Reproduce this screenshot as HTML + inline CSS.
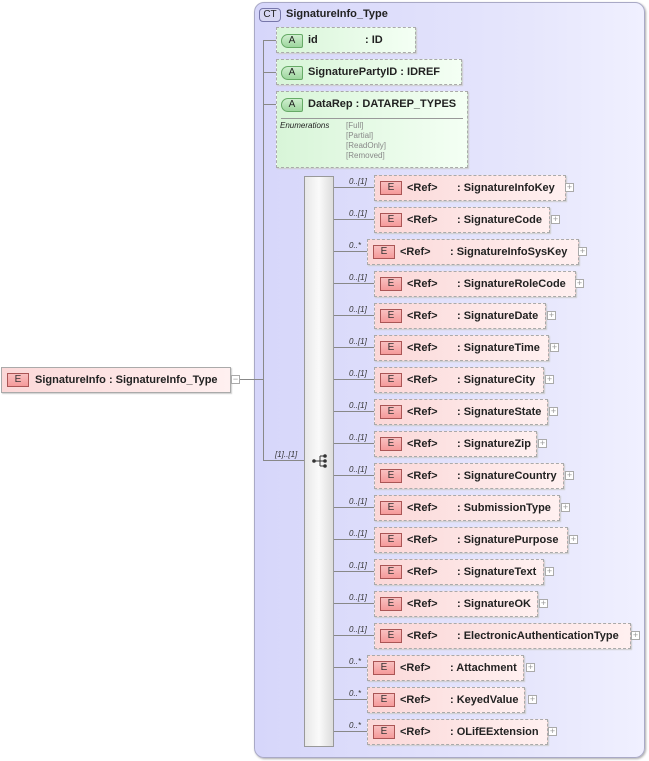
<!DOCTYPE html>
<html><head><meta charset="utf-8"><style>
*{margin:0;padding:0;box-sizing:border-box}
body{width:649px;height:761px;background:#fff;position:relative;overflow:hidden;font-family:"Liberation Sans",Arial,sans-serif;font-size:11px;font-weight:bold;color:#222}
.a{position:absolute}
.ct{left:254px;top:2px;width:391px;height:756px;background:linear-gradient(90deg,#d6d6fa,#e6e6fc 70%,#f0f0ff);border:1px solid #a9a9c6;border-radius:10px;box-shadow:1px 1px 2px #aaa}
.hl{position:absolute;height:1px;background:#888}
.vl{position:absolute;width:1px;background:#888}
.el{position:absolute;height:26px;background:linear-gradient(90deg,#fbd8d8,#fff0f0);border:1px dashed #aaa;box-shadow:1px 1px 1px #ccc}
.ic{position:absolute;left:5px;top:5px;width:22px;height:14px;border:1px solid #a55;background:linear-gradient(#f9c0c0,#f59a9a);font-size:10px;font-weight:normal;text-align:center;line-height:12px;color:#333}
.t{position:absolute;top:6px;white-space:nowrap}
.pl{position:absolute;width:9px;height:9px;border:1px solid #aaa;background:#fff;font-size:9px;line-height:7px;text-align:center;color:#999;font-weight:normal}
.m{position:absolute;font-size:8px;font-style:italic;font-weight:normal;color:#333}
.at{position:absolute;background:linear-gradient(90deg,#d8f5d8,#f4fff4);border:1px dashed #aaa;box-shadow:1px 1px 1px #ccc}
.ai{position:absolute;left:4px;top:6px;width:22px;height:14px;border:1px solid #6a6;border-radius:7px 2px 2px 7px;background:linear-gradient(#cfeecf,#9ed69e);font-size:10px;font-weight:normal;text-align:center;line-height:12px}
</style></head><body>
<div class="a ct"></div>
<div class="a" style="left:259px;top:8px;width:22px;height:14px;border:1px solid #77a;border-radius:4px;background:#d8d8f4;font-size:10px;font-weight:normal;text-align:center;line-height:12px">CT</div>
<div class="a" style="left:286px;top:8px">SignatureInfo_Type</div>

<!-- root -->
<div class="el" style="left:1px;top:367px;width:230px;border:1px solid #aaa"><div class="ic">E</div><div class="t" style="left:33px">SignatureInfo : SignatureInfo_Type</div></div>
<div class="pl" style="left:231px;top:375px">−</div>
<div class="hl" style="left:240px;top:379px;width:24px"></div>
<div class="vl" style="left:263px;top:40px;height:421px"></div>
<div class="hl" style="left:263px;top:40px;width:14px"></div>
<div class="hl" style="left:263px;top:72px;width:14px"></div>
<div class="hl" style="left:263px;top:104px;width:14px"></div>
<div class="hl" style="left:263px;top:460px;width:42px"></div>
<div class="m" style="left:275px;top:450px">[1]..[1]</div>

<!-- attributes -->
<div class="at" style="left:276px;top:27px;width:140px;height:26px"><div class="ai">A</div><div class="t" style="left:31px">id</div><div class="t" style="left:88px">: ID</div></div>
<div class="at" style="left:276px;top:59px;width:186px;height:26px"><div class="ai">A</div><div class="t" style="left:31px">SignaturePartyID : IDREF</div></div>
<div class="at" style="left:276px;top:91px;width:192px;height:77px"><div class="ai">A</div><div class="t" style="left:31px">DataRep : DATAREP_TYPES</div>
<div class="a" style="left:4px;top:26px;width:182px;height:1px;background:#999"></div>
<div class="a" style="left:3px;top:29px;font-size:8px;font-style:italic;font-weight:normal">Enumerations</div>
<div class="a" style="left:69px;top:29px;font-size:8px;font-weight:normal;color:#888;line-height:10px">[Full]<br>[Partial]<br>[ReadOnly]<br>[Removed]</div></div>

<!-- sequence -->
<div class="a" style="left:304px;top:176px;width:30px;height:571px;background:linear-gradient(90deg,#e8e8e8,#fafafa 50%,#ddd);border:1px solid #999"></div>
<svg class="a" style="left:311px;top:452px" width="18" height="18" viewBox="0 0 18 18"><circle cx="3" cy="9" r="1.8" fill="#333"/><path d="M3 9H9M9 4V14M9 4H14M9 9H14M9 14H14" stroke="#333" fill="none"/><circle cx="14" cy="4" r="1.8" fill="#333"/><circle cx="14" cy="9" r="1.8" fill="#333"/><circle cx="14" cy="14" r="1.8" fill="#333"/></svg>

<!-- rows -->
<div class="hl" style="left:334px;top:187px;width:40px"></div><div class="m" style="left:349px;top:177px">0..[1]</div><div class="el" style="left:374px;top:175px;width:192px"><div class="ic">E</div><div class="t" style="left:32px">&lt;Ref&gt;</div><div class="t" style="left:82px">: SignatureInfoKey</div></div><div class="pl" style="left:565px;top:183px">+</div>
<div class="hl" style="left:334px;top:219px;width:40px"></div><div class="m" style="left:349px;top:209px">0..[1]</div><div class="el" style="left:374px;top:207px;width:176px"><div class="ic">E</div><div class="t" style="left:32px">&lt;Ref&gt;</div><div class="t" style="left:82px">: SignatureCode</div></div><div class="pl" style="left:551px;top:215px">+</div>
<div class="hl" style="left:334px;top:251px;width:33px"></div><div class="m" style="left:349px;top:241px">0..*</div><div class="el" style="left:367px;top:239px;width:212px"><div class="ic">E</div><div class="t" style="left:32px">&lt;Ref&gt;</div><div class="t" style="left:82px">: SignatureInfoSysKey</div></div><div class="pl" style="left:578px;top:247px">+</div>
<div class="hl" style="left:334px;top:283px;width:40px"></div><div class="m" style="left:349px;top:273px">0..[1]</div><div class="el" style="left:374px;top:271px;width:202px"><div class="ic">E</div><div class="t" style="left:32px">&lt;Ref&gt;</div><div class="t" style="left:82px">: SignatureRoleCode</div></div><div class="pl" style="left:575px;top:279px">+</div>
<div class="hl" style="left:334px;top:315px;width:40px"></div><div class="m" style="left:349px;top:305px">0..[1]</div><div class="el" style="left:374px;top:303px;width:172px"><div class="ic">E</div><div class="t" style="left:32px">&lt;Ref&gt;</div><div class="t" style="left:82px">: SignatureDate</div></div><div class="pl" style="left:547px;top:311px">+</div>
<div class="hl" style="left:334px;top:347px;width:40px"></div><div class="m" style="left:349px;top:337px">0..[1]</div><div class="el" style="left:374px;top:335px;width:175px"><div class="ic">E</div><div class="t" style="left:32px">&lt;Ref&gt;</div><div class="t" style="left:82px">: SignatureTime</div></div><div class="pl" style="left:550px;top:343px">+</div>
<div class="hl" style="left:334px;top:379px;width:40px"></div><div class="m" style="left:349px;top:369px">0..[1]</div><div class="el" style="left:374px;top:367px;width:170px"><div class="ic">E</div><div class="t" style="left:32px">&lt;Ref&gt;</div><div class="t" style="left:82px">: SignatureCity</div></div><div class="pl" style="left:545px;top:375px">+</div>
<div class="hl" style="left:334px;top:411px;width:40px"></div><div class="m" style="left:349px;top:401px">0..[1]</div><div class="el" style="left:374px;top:399px;width:174px"><div class="ic">E</div><div class="t" style="left:32px">&lt;Ref&gt;</div><div class="t" style="left:82px">: SignatureState</div></div><div class="pl" style="left:549px;top:407px">+</div>
<div class="hl" style="left:334px;top:443px;width:40px"></div><div class="m" style="left:349px;top:433px">0..[1]</div><div class="el" style="left:374px;top:431px;width:163px"><div class="ic">E</div><div class="t" style="left:32px">&lt;Ref&gt;</div><div class="t" style="left:82px">: SignatureZip</div></div><div class="pl" style="left:538px;top:439px">+</div>
<div class="hl" style="left:334px;top:475px;width:40px"></div><div class="m" style="left:349px;top:465px">0..[1]</div><div class="el" style="left:374px;top:463px;width:190px"><div class="ic">E</div><div class="t" style="left:32px">&lt;Ref&gt;</div><div class="t" style="left:82px">: SignatureCountry</div></div><div class="pl" style="left:565px;top:471px">+</div>
<div class="hl" style="left:334px;top:507px;width:40px"></div><div class="m" style="left:349px;top:497px">0..[1]</div><div class="el" style="left:374px;top:495px;width:186px"><div class="ic">E</div><div class="t" style="left:32px">&lt;Ref&gt;</div><div class="t" style="left:82px">: SubmissionType</div></div><div class="pl" style="left:561px;top:503px">+</div>
<div class="hl" style="left:334px;top:539px;width:40px"></div><div class="m" style="left:349px;top:529px">0..[1]</div><div class="el" style="left:374px;top:527px;width:194px"><div class="ic">E</div><div class="t" style="left:32px">&lt;Ref&gt;</div><div class="t" style="left:82px">: SignaturePurpose</div></div><div class="pl" style="left:569px;top:535px">+</div>
<div class="hl" style="left:334px;top:571px;width:40px"></div><div class="m" style="left:349px;top:561px">0..[1]</div><div class="el" style="left:374px;top:559px;width:170px"><div class="ic">E</div><div class="t" style="left:32px">&lt;Ref&gt;</div><div class="t" style="left:82px">: SignatureText</div></div><div class="pl" style="left:545px;top:567px">+</div>
<div class="hl" style="left:334px;top:603px;width:40px"></div><div class="m" style="left:349px;top:593px">0..[1]</div><div class="el" style="left:374px;top:591px;width:164px"><div class="ic">E</div><div class="t" style="left:32px">&lt;Ref&gt;</div><div class="t" style="left:82px">: SignatureOK</div></div><div class="pl" style="left:539px;top:599px">+</div>
<div class="hl" style="left:334px;top:635px;width:40px"></div><div class="m" style="left:349px;top:625px">0..[1]</div><div class="el" style="left:374px;top:623px;width:257px"><div class="ic">E</div><div class="t" style="left:32px">&lt;Ref&gt;</div><div class="t" style="left:82px">: ElectronicAuthenticationType</div></div><div class="pl" style="left:631px;top:631px">+</div>
<div class="hl" style="left:334px;top:667px;width:33px"></div><div class="m" style="left:349px;top:657px">0..*</div><div class="el" style="left:367px;top:655px;width:157px"><div class="ic">E</div><div class="t" style="left:32px">&lt;Ref&gt;</div><div class="t" style="left:82px">: Attachment</div></div><div class="pl" style="left:526px;top:663px">+</div>
<div class="hl" style="left:334px;top:699px;width:33px"></div><div class="m" style="left:349px;top:689px">0..*</div><div class="el" style="left:367px;top:687px;width:158px"><div class="ic">E</div><div class="t" style="left:32px">&lt;Ref&gt;</div><div class="t" style="left:82px">: KeyedValue</div></div><div class="pl" style="left:528px;top:695px">+</div>
<div class="hl" style="left:334px;top:731px;width:33px"></div><div class="m" style="left:349px;top:721px">0..*</div><div class="el" style="left:367px;top:719px;width:181px"><div class="ic">E</div><div class="t" style="left:32px">&lt;Ref&gt;</div><div class="t" style="left:82px">: OLifEExtension</div></div><div class="pl" style="left:548px;top:727px">+</div>
</body></html>
